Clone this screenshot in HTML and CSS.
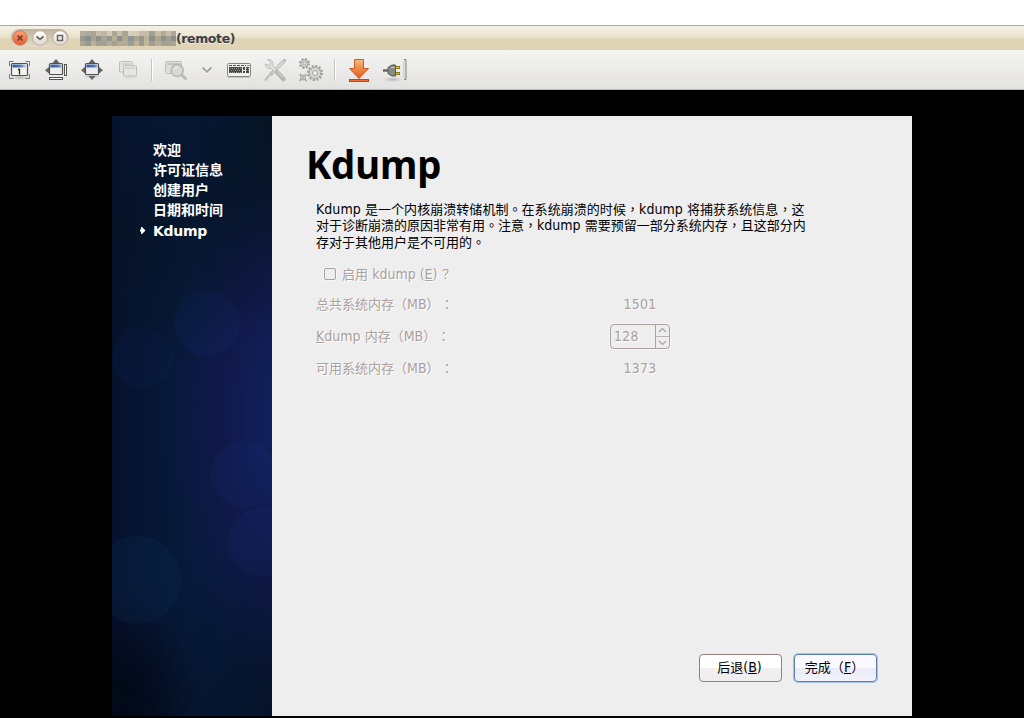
FILE: index.html
```html
<!DOCTYPE html>
<html lang="zh-CN">
<head>
<meta charset="utf-8">
<title>Kdump</title>
<link rel="stylesheet" href="styles.css">
</head>
<body>
<header class="titlebar">
  <svg class="controls" width="62" height="24" viewBox="8 26 62 24">
    <defs>
      <linearGradient id="pill" x2="0" y2="1"><stop stop-color="#bfb29c"/><stop offset="1" stop-color="#e4dbc6"/></linearGradient>
      <linearGradient id="knob" x2="0" y2="1"><stop stop-color="#fff"/><stop offset="1" stop-color="#ddd8ce"/></linearGradient>
      <linearGradient id="close" x2="0" y2="1"><stop stop-color="#ffa078"/><stop offset="1" stop-color="#e65c30"/></linearGradient>
    </defs>
    <rect x="10.500" y="29" width="58.500" height="18" rx="9" fill="url(#pill)"/>
    <circle cx="20" cy="38" r="7.200" fill="url(#close)" stroke="#c07052" stroke-width=".8"/>
    <path d="M17.500 35.500l5 5m0-5l-5 5" stroke="#6b3a28" stroke-width="1.500"/>
    <circle cx="40" cy="38" r="7.200" fill="url(#knob)" stroke="#aaa08e" stroke-width=".7"/>
    <path d="M36.500 36.500l3.500 3 3.500-3" fill="none" stroke="#69675f" stroke-width="1.700"/>
    <circle cx="60" cy="38" r="7.200" fill="url(#knob)" stroke="#aaa08e" stroke-width=".7"/>
    <rect x="57.500" y="35.500" width="5" height="5" fill="none" stroke="#69675f" stroke-width="1.500"/>
  </svg>
  <span class="redacted"><i class="mosaic mosaic-a"></i><i class="mosaic mosaic-b"></i><i class="mosaic mosaic-c"></i></span>
  <span class="title">(remote)</span>
</header>

<nav class="toolbar">
  <svg width="36" height="39" viewBox="2 50 36 39">
    <defs><linearGradient id="blue" gradientUnits="userSpaceOnUse" x1="0" x2="14" y1="0" y2="0"><stop stop-color="#2e5ba5"/><stop offset=".55" stop-color="#5878ae"/><stop offset="1" stop-color="#d5dcec"/></linearGradient>
    <radialGradient id="sh"><stop stop-color="#888" stop-opacity=".5"/><stop offset="1" stop-color="#888" stop-opacity="0"/></radialGradient></defs>
    <ellipse cx="20" cy="77.500" rx="10" ry="2.500" fill="url(#sh)"/>
    <path d="M9.500 66v-4.500h4M25.500 61.500h4V66M9.500 74v4.500h4M25.500 78.500h4V74" fill="none" stroke="#777972"/>
    <rect x="11.500" y="63.500" width="16" height="12" rx="1" fill="#f2f3f1" stroke="#50534d" stroke-width="1.200"/>
    <rect width="14" height="3" fill="url(#blue)" transform="translate(12.500 64.500)"/>
    <path d="M18 69.500h1.500v5" fill="none" stroke="#222" stroke-width="1.300"/>
  </svg>
  <svg width="36" height="39" viewBox="38 50 36 39">
    <path d="M52.500 63l3.500-4 3.500 4zM49 67v6.500l-4-3.250z" fill="#62645d"/>
    <rect x="49.500" y="63.500" width="13" height="11" rx="1" fill="#eee" stroke="#50534d" stroke-width="1.200"/>
    <rect width="11" height="3" fill="url(#blue)" transform="translate(50.500 64.500)"/>
    <rect x="64.500" y="64.500" width="2" height="11" fill="#fff" stroke="#50534d"/>
    <rect x="49.500" y="77.500" width="13" height="2" fill="#fff" stroke="#50534d"/>
  </svg>
  <svg width="37" height="39" viewBox="74 50 37 39">
    <ellipse cx="92" cy="76" rx="10" ry="3" fill="url(#sh)"/>
    <path d="M88.500 63l3.500-4 3.500 4zM85 67v6.500l-4-3.250zM99 67v6.500l4-3.250zM88.500 76l3.500 4 3.500-4z" fill="#62645d"/>
    <rect x="85.500" y="63.500" width="13" height="11" rx="1" fill="#eee" stroke="#50534d" stroke-width="1.200"/>
    <rect width="11" height="3" fill="url(#blue)" transform="translate(86.500 64.500)"/>
  </svg>
  <svg width="37" height="39" viewBox="111 50 37 39">
    <g fill="#e5e5e3" stroke="#bdbdba"><rect x="119.500" y="61.500" width="13" height="10.500" rx="1"/><path d="M121 64h10" stroke="#d2d2d0" stroke-width="2"/>
    <rect x="123.500" y="65.500" width="13" height="10.500" rx="1"/><path d="M125 68h10" stroke="#d2d2d0" stroke-width="2"/></g>
    <ellipse cx="130" cy="77.500" rx="9" ry="1.800" fill="url(#sh)" opacity=".35"/>
  </svg>
  <i class="sep"></i>
  <svg width="41" height="39" viewBox="157 50 41 39">
    <rect x="165.500" y="61.500" width="16" height="12" rx="1" fill="#dededc" stroke="#bdbdba"/>
    <path d="M167 64h13" stroke="#c4c4c2" stroke-width="2"/>
    <path d="M180.500 74l5 4.500" stroke="#b9b9b6" stroke-width="3" stroke-linecap="round"/>
    <circle cx="177.200" cy="70.500" r="6" fill="#d9d9d7" stroke="#b6b6b3" stroke-width="1.600"/>
    <path d="M174 69.500q1-2.500 3.500-2.500" fill="none" stroke="#f4f4f4"/>
  </svg>
  <svg width="22" height="39" viewBox="198 50 22 39"><path d="M202.500 69l4.500 4 4.500-4" fill="none" stroke="#fff" stroke-width="1.500"/><path d="M202.500 67.500l4.500 4.500 4.500-4.500" fill="none" stroke="#a3a29f" stroke-width="1.800"/></svg>
  <svg width="38" height="39" viewBox="220 50 38 39">
    <rect x="227.500" y="63.500" width="23" height="13" rx="1" fill="#efefed" stroke="#858782"/>
    <path d="M229 65.500h17" stroke="#50524e" stroke-dasharray="3 1"/><path d="M247 65.500h3" stroke="#67b55a"/>
    <path d="M229 67h13v6h-13zM243 67h2v3h-2zM243 71h2v2h-2zM246 67h3v6h-3z" fill="#484a46"/>
    <path d="M230 68.500h11M231 70.500h10M230 72.500h11M246 68.500h3M246 70.500h3" stroke="#999" stroke-dasharray="1 1"/>
    <path d="M228 77.500h22" stroke="#c4c4c2"/>
  </svg>
  <svg width="36" height="39" viewBox="258 50 36 39">
    <path d="M284.500 60.500L271 74" stroke="#b8b8b5" stroke-width="3.500" stroke-linecap="round"/>
    <path d="M284 61L272 73" stroke="#dededc" stroke-width="1.600"/>
    <path d="M272 72l-6.500 8" stroke="#c0c0bd" stroke-width="2.200" stroke-linecap="round"/>
    <path d="M267 59.500l3 1.500 1 3-2 1.500-3.500-1.500c0 4 3 5 5.500 4l3.500 4 2.500-2.500-4-3.500c1-3.500-1-7-6-6.500z" fill="#e1e1df" stroke="#bcbcb9"/>
    <path d="M277 72l6.500 7" stroke="#b5b5b2" stroke-width="4.500" stroke-linecap="round"/><path d="M277 71l6.500 7" stroke="#c9c9c6" stroke-width="1.500"/>
  </svg>
  <svg width="36" height="39" viewBox="294 50 36 39">
    <g fill="none" stroke="#a2a29f">
      <circle cx="304.500" cy="63.500" r="4.600" stroke-width="2" stroke-dasharray="2 1.610"/><circle cx="304.500" cy="63.500" r="3.500" fill="#ddd"/><circle cx="304.500" cy="63.500" r="1.500" fill="#f2f2f0"/>
      <circle cx="315" cy="73" r="7" stroke-width="2.200" stroke-dasharray="2.200 1.465"/><circle cx="315" cy="73" r="5.700" fill="#d8d8d6"/><circle cx="315" cy="73" r="2.500" fill="#f2f2f0"/>
      <circle cx="303" cy="77.500" r="2.500" fill="#ddd"/><circle cx="303" cy="77.500" r="1"/><path d="M299.500 74l1.800 1.800M306.500 74l-1.800 1.800M299.500 81l1.800-1.800M306.500 81l-1.800-1.800" stroke-width="1.500"/>
    </g>
  </svg>
  <i class="sep sep-wide"></i>
  <svg width="37" height="39" viewBox="339 50 37 39">
    <defs><linearGradient id="or" x2="0" y2="1"><stop stop-color="#f6bd83"/><stop offset=".6" stop-color="#ee7d3c"/><stop offset="1" stop-color="#e05a20"/></linearGradient></defs>
    <path d="M354.500 59.500h9v9h5L359 78.500 349.500 68.500h5z" fill="url(#or)" stroke="#cf5a24"/>
    <rect x="349.500" y="79.500" width="19" height="2" fill="#f06a35" stroke="#c8401c"/>
  </svg>
  <svg width="36" height="39" viewBox="376 50 36 39">
    <ellipse cx="393" cy="79.500" rx="10" ry="2.500" fill="url(#sh)"/>
    <path d="M383 70.500h6" stroke="#62645e" stroke-width="2.400"/>
    <path d="M388 67.500l4-2.500h3.500v11H392l-4-2.500z" fill="#888a84" stroke="#555751"/>
    <path d="M391 67.500h4" stroke="#c8c9c5"/>
    <path d="M396 67.500h4M396 73.500h4" stroke="#6c5e12" stroke-width="3"/><path d="M396 67.500h3.500M396 73.500h3.500" stroke="#e9cb21" stroke-width="1.500"/>
    <path d="M403.500 61v17" stroke="#d2d2cf"/><path d="M404 59.500h2v20h-2" fill="#ddd" stroke="#858782"/>
  </svg>
</nav>

<main class="screen">
  <aside class="sidebar">
    <svg class="bokeh" width="160" height="600" viewBox="112 116 160 600">
      <g fill="#183b8d" fill-opacity=".12" stroke="#3156a1" stroke-opacity=".1">
        <circle cx="207" cy="323" r="32"/><circle cx="143" cy="358" r="29" fill-opacity=".07"/>
        <circle cx="244" cy="474" r="32"/><circle cx="263" cy="542" r="34"/><circle cx="137" cy="580" r="43" fill="#0b4065" fill-opacity=".16"/>
      </g>
    </svg>
    <ul class="steps">
      <li>欢迎</li><li>许可证信息</li><li>创建用户</li><li>日期和时间</li>
      <li class="current"><svg class="marker" width="6" height="7" viewBox="0 0 6 7"><path d="M1 0h1l3.500 3.500L2 7H1V4.500H0v-2h1z" fill="#fff"/></svg>Kdump</li>
    </ul>
  </aside>

  <section class="panel">
    <h1>Kdump</h1>
    <div class="intro">
      <p><span class="en">Kdump</span> 是一个内核崩溃转储机制<b lang="zh-TW">。</b>在系统崩溃的时候<b lang="zh-TW">，</b><span class="en">kdump</span> 将捕获系统信息<b lang="zh-TW">，</b>这</p>
      <p>对于诊断崩溃的原因非常有用<b lang="zh-TW">。</b>注意<b lang="zh-TW">，</b><span class="en">kdump</span> 需要预留一部分系统内存<b lang="zh-TW">，</b>且这部分内</p>
      <p>存对于其他用户是不可用的<b lang="zh-TW">。</b></p>
    </div>
    <label class="enable"><i class="box"></i><span>启用 <span class="en">kdump (<u>E</u>)</span><small lang="zh-TW">？</small></span></label>
    <div class="row"><span class="name">总共系统内存（<span class="en">MB</span>）<b lang="zh-TW">：</b></span><span class="value">1501</span></div>
    <div class="row"><span class="name"><span class="en"><u>K</u>dump</span> 内存（<span class="en">MB</span>）<b lang="zh-TW">：</b></span>
      <span class="spin"><span class="num">128</span><span class="arrows">
        <svg width="13" height="11" viewBox="0 0 13 11"><path d="M3 7l3.500-3.500L10 7" fill="none" stroke="#aaa09e" stroke-width="1.200"/></svg>
        <svg width="13" height="11" viewBox="0 0 13 11"><path d="M3 4l3.500 3.500L10 4" fill="none" stroke="#aaa09e" stroke-width="1.200"/></svg>
      </span></span></div>
    <div class="row"><span class="name">可用系统内存（<span class="en">MB</span>）<b lang="zh-TW">：</b></span><span class="value">1373</span></div>
    <footer class="actions">
      <button class="btn">后退<span class="en">(<u>B</u>)</span></button>
      <button class="btn primary">完成（<span class="en"><u>F</u></span>）</button>
    </footer>
  </section>
</main>
</body>
</html>
```
FILE: styles.css
```css
* { box-sizing: border-box; }
body { margin: 0; padding-top: 25px; width: 1024px; height: 718px; overflow: hidden; background: #fff; font: 13px/16px "DejaVu Sans", "Noto Sans CJK SC", sans-serif; color: #000; text-spacing-trim: space-all; }
svg { display: block; flex: none; }
b, i { font-weight: inherit; font-style: normal; }

.titlebar { height: 25px; border-top: 1px solid #aaa6a1; background: linear-gradient(#f5f1e8, #ebe3cd 45%, #dfd4b4 55%, #ded3b3); display: flex; align-items: center; padding-left: 8px; }
.redacted { width: 96px; margin-left: 10px; display: flex; flex-direction: column; }
.mosaic { height: 5px; }
.mosaic-a { background: linear-gradient(90deg, #b5ae9e 0 5%, #aaa99f 5% 11%, #a8a393 11% 17%, #c5bda8 17% 22%, #bdb6a3 22% 28%, #d0c9b6 28% 33%, #aaa697 33% 39%, #c7bfac 39% 44%, #a9a392 44% 50%, #d7cdb7 50% 61%, #c4bca6 61% 72%, #a3a092 72% 78%, #c7bea7 78% 84%, #b0aa9b 84% 90%, #c7bfaa 90% 95%, #aba69b 95%); }
.mosaic-b { background: linear-gradient(90deg, #9b9994 0 5%, #87908f 5% 11%, #aaa28f 11% 17%, #90908a 17% 22%, #aaa593 22% 28%, #97968d 28% 33%, #b6ae99 33% 39%, #8e9189 39% 44%, #b2a890 44% 50%, #8c9696 50% 56%, #ada48d 56% 61%, #95978c 61% 67%, #beb39b 67% 72%, #8a9089 72% 78%, #aea58e 78% 84%, #929388 84% 90%, #a29e94 90% 95%, #8e908a 95%); }
.mosaic-c { background: linear-gradient(90deg, #aba692 0 5%, #9b9b91 5% 11%, #bbb198 11% 17%, #a3a094 17% 28%, #b5ad98 28% 33%, #a5a18f 33% 39%, #b4ab94 39% 50%, #9d9d91 50% 56%, #beb39a 56% 61%, #9e9c90 61% 67%, #c3b89d 67% 72%, #a09e90 72% 78%, #b5ac97 78% 84%, #a7a28f 84% 95%, #aaa594 95%); }
.title { font-weight: bold; font-size: 12.500px; color: #3c3c48; margin: 1px 0 0; letter-spacing: -.38px; text-shadow: 0 1px #f3ecd9; }

.toolbar { height: 40px; border-bottom: 1px solid #bbb9b6; background: linear-gradient(#f4f4f2, #e3e2e0); display: flex; align-items: center; padding-left: 2px; }
.sep { width: 2px; height: 22px; margin: 0 4px 0 3px; border-left: 1px solid #c5c4c1; background: #fff; }
.sep-wide { margin: 0 3px 0 4px; }

.screen { height: 628px; background: #000; padding: 26px 112px 2px; display: flex; }
.sidebar { position: relative; width: 160px; height: 600px; overflow: hidden; background:
  radial-gradient(ellipse 95px 120px at 0 100%, #000512 25%, transparent),
  radial-gradient(ellipse 120px 280px at 108% 50%, #11205b 15%, #101849 55%, transparent),
  linear-gradient(90deg, #06122f, #071a3b 50%, transparent),
  linear-gradient(#071421, #061632 30%, #071e44 60%, #06152e); }
.sidebar::after { content: ""; position: absolute; inset: 0; background: linear-gradient(160deg, rgba(6, 20, 46, .5), rgba(6, 20, 36, .6) 18%, transparent 42%, transparent 72%, rgba(5, 18, 38, .5)); }
.bokeh { position: absolute; inset: 0; }
.steps { position: relative; z-index: 1; list-style: none; margin: 0; padding: 24px 0 0 41px; color: #fff; font-weight: bold; font-size: 14px; line-height: 20px; }
.steps li { height: 20px; }
.steps .current { position: relative; line-height: 22px; letter-spacing: -.3px; }
.marker { position: absolute; left: -13px; top: 7px; }

.panel { width: 640px; height: 600px; background: #eee; padding: 26px 35px 34px 44px; display: flex; flex-direction: column; }
.en { font-family: "DejaVu Sans Condensed", "DejaVu Sans", sans-serif; font-stretch: condensed; font-size: 14px; line-height: 1; }
h1 { margin: 0 0 0 -10px; font-family: "Open Sans", "Noto Sans", sans-serif; font-size: 38.500px; font-weight: 700; letter-spacing: -.5px; line-height: 45px; height: 58.500px; }
.intro { white-space: nowrap; line-height: 16.500px; }
.intro p { margin: 0; height: 16.500px; }
.intro p:first-child { letter-spacing: .05px; }
.intro b, .name b, .enable small { font-family: "Noto Sans CJK TC", sans-serif; }
.enable, .row { color: #aaa09e; text-shadow: 1px 1px #fff; white-space: nowrap; }
.enable { height: 32px; margin-top: 8px; padding-left: 8px; display: flex; align-items: center; gap: 6px; }
.enable small { font-size: 12px; margin-left: 2px; }
.box { width: 12px; height: 12px; border: 1px solid #aaa09e; border-radius: 2px; box-shadow: 0 0 0 1px #f8f6f6; }
.row { height: 32px; display: flex; align-items: center; }
.row:nth-of-type(2) { margin-top: -2px; }
.name { width: 294px; }
.name b { margin-left: 1px; }
.value { width: 60px; text-align: center; }
.spin { width: 60px; height: 25px; border: 1px solid #aaa09e; border-radius: 4px; display: flex; box-shadow: 0 0 0 1px #f8f6f6; }
.num { width: 44px; padding-left: 3px; line-height: 23px; }
.value, .num { font-family: "DejaVu Sans Condensed", "DejaVu Sans", sans-serif; font-stretch: condensed; font-size: 14px; letter-spacing: .2px; }
.arrows { width: 14px; border-left: 1px solid #aaa09e; }
.arrows svg + svg { border-top: 1px solid #bdb4b2; height: 12px; }
.actions { margin-top: auto; display: flex; justify-content: flex-end; gap: 12px; }
.btn { width: 83px; height: 28px; padding: 0 2px 0 0; border: 1px solid #91817e; border-radius: 4px; background: linear-gradient(#fff 50%, #f2efef 52%, #eee); font: inherit; color: #000; white-space: nowrap; text-spacing-trim: space-all; }
.primary { border: 1px solid #5a7fb0; background: linear-gradient(#f9f9ff 50%, #ececf8 52%, #f2f2fc); box-shadow: 0 0 0 1px #a9c3e3; }
```
